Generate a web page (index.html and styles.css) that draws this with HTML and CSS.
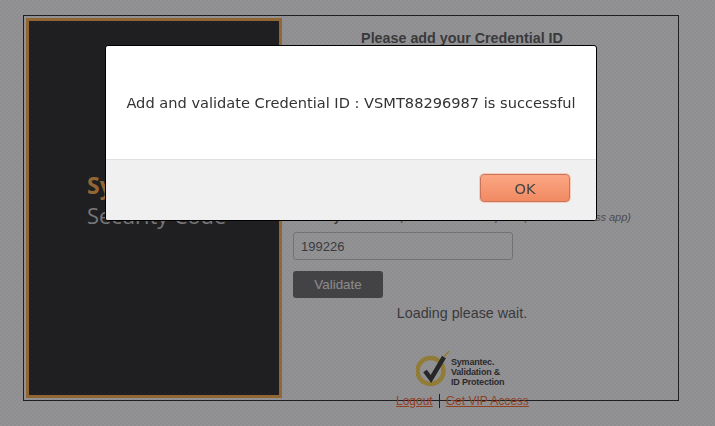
FILE: index.html
```html
<!DOCTYPE html>
<html lang="en">
<head>
  <meta charset="UTF-8" />
  <title>Add Credential</title>
  <link rel="stylesheet" href="styles.css">
</head>
<body>
  <div class="frame">
    <div class="brand">
      <div class="brand-title">Symantec VIP</div>
      <div class="brand-sub">Security Code</div>
    </div>
    <div class="form">
      <h2>Please add your Credential ID</h2>
      <div class="code-label">
        <strong>Security Code</strong>
        <span>(the 6 number code)</span>
        <em>(from the Access app)</em>
      </div>
      <input class="code-input" type="text" value="199226" />
      <button class="validate" type="button">Validate</button>
      <p class="loading">Loading please wait.</p>
      <div class="logo">
        <svg width="34" height="38" viewBox="0 0 34 38" aria-hidden="true">
          <circle cx="14.5" cy="20" r="13" fill="none" stroke="#ffcf30" stroke-width="4.5"/>
          <path d="M9 20 L15 28 L28 6" fill="none" stroke="#111" stroke-width="4.5"/>
          <path d="M28 6 L33 0" fill="none" stroke="#ffcf30" stroke-width="1.5"/>
        </svg>
        <div class="logo-text">Symantec.<br>Validation &amp;<br>ID Protection</div>
      </div>
      <div class="links">
        <a href="#">Logout</a>
        <span class="sep"></span>
        <a href="#">Get VIP Access</a>
      </div>
    </div>
  </div>

  <div class="overlay">
    <div class="modal">
      <div class="modal-body">Add and validate Credential ID : VSMT88296987 is successful</div>
      <div class="modal-foot">
        <button class="ok" type="button">OK</button>
      </div>
    </div>
  </div>
</body>
</html>
```

FILE: styles.css
```css
* {
  box-sizing: border-box;
  margin: 0;
  padding: 0;
}

body {
  background: #fff;
  color: #3b3b3b;
  font-family: 'Liberation Sans', Arial, sans-serif;
  height: 426px;
  overflow: hidden;
}

.frame {
  display: flex;
  width: 656px;
  height: 386px;
  margin: 15px 0 0 23px;
  padding: 2px;
  border: 1px solid #000;
}

.brand {
  width: 256px;
  flex-shrink: 0;
  padding: 149px 0 0 58px;
  background: #000;
  border: 3px solid #ffa12b;
  font-family: 'Open Sans', sans-serif;
  white-space: nowrap;
}

.brand-title {
  color: #ffa12b;
  font-size: 23px;
  font-weight: 700;
  line-height: 31px;
}

.brand-sub {
  color: #c5c5c5;
  font-size: 21.8px;
  line-height: 30px;
}

.form {
  flex: 1;
  min-width: 0;
  padding: 0 45px 0 11px;
  display: flex;
  flex-direction: column;
  align-items: flex-start;
}

.form > * {
  flex-shrink: 0;
}

.form h2 {
  width: 100%;
  margin-top: 12px;
  font-size: 14.3px;
  line-height: 16px;
  text-align: center;
}

.code-label {
  display: flex;
  justify-content: space-between;
  align-items: baseline;
  width: 100%;
  margin-top: 165px;
  font-size: 11px;
  line-height: 13px;
  white-space: nowrap;
}

.code-label strong {
  font-size: 12px;
}

.code-label em {
  color: #666;
}

.code-input {
  width: 220px;
  height: 28px;
  margin-top: 8px;
  padding: 0 7px;
  background: #fff;
  border: 1px solid #bbb;
  border-radius: 3px;
  color: #3b3b3b;
  font-family: inherit;
  font-size: 13px;
}

.validate {
  width: 90px;
  height: 27px;
  margin-top: 11px;
  background: #505050;
  border: none;
  border-radius: 3px;
  color: #f0f0f0;
  font-family: inherit;
  font-size: 13.4px;
}

.loading {
  width: 100%;
  margin-top: 6px;
  font-size: 14.3px;
  line-height: 18px;
  text-align: center;
}

.logo {
  display: flex;
  align-items: flex-end;
  gap: 1px;
  margin: 29px 0 0 123px;
}

.logo-text {
  margin-bottom: 2px;
  color: #111;
  font-size: 9px;
  font-weight: 700;
  line-height: 10px;
  letter-spacing: -0.2px;
  white-space: nowrap;
}

.links {
  display: flex;
  align-items: center;
  gap: 6px;
  margin: 5px 0 0 103px;
  font-size: 12px;
  white-space: nowrap;
}

.links a {
  color: #ff4d00;
}

.sep {
  width: 1px;
  height: 14px;
  background: #000;
}

.overlay {
  position: fixed;
  top: 0;
  left: 0;
  right: 0;
  bottom: 0;
  padding: 45px 0 0 105px;
  background-color: rgba(59, 59, 62, 0.55);
  background-image: repeating-conic-gradient(rgba(0, 0, 0, 0.03) 0 25%, transparent 0 50%);
  background-size: 4px 4px;
}

.modal {
  width: 492px;
  height: 176px;
  display: flex;
  flex-direction: column;
  background: #fff;
  border: 1px solid #000;
  border-radius: 3px;
  overflow: hidden;
}

.modal-body {
  height: 113px;
  padding-top: 48px;
  color: #333;
  font-family: 'DejaVu Sans', Verdana, sans-serif;
  font-size: 14.6px;
  line-height: 18px;
  text-align: center;
}

.modal-foot {
  flex: 1;
  display: flex;
  justify-content: flex-end;
  padding: 14px 26px 0 0;
  background: #f0f0f0;
  border-top: 1px solid #e0e0e0;
}

.ok {
  width: 90px;
  height: 28px;
  background: linear-gradient(#fca784, #f08a62);
  border: 1px solid #c9735a;
  border-radius: 4px;
  box-shadow: 0 0 0 1px #f6cdbd;
  color: #444;
  font-family: 'DejaVu Sans', Verdana, sans-serif;
  font-size: 14.6px;
}
```
